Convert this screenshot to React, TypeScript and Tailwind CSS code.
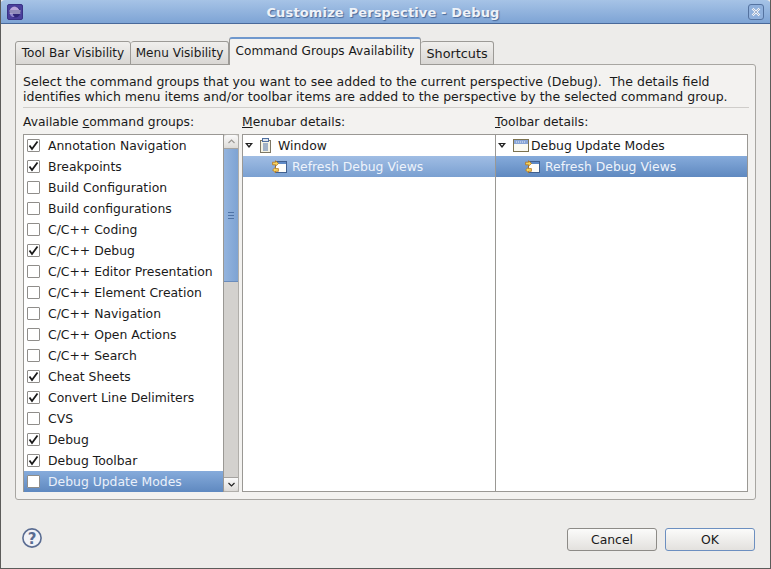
const groups: [string, boolean][] = [
  ["Annotation Navigation", true],
  ["Breakpoints", true],
  ["Build Configuration", false],
  ["Build configurations", false],
  ["C/C++ Coding", false],
  ["C/C++ Debug", true],
  ["C/C++ Editor Presentation", false],
  ["C/C++ Element Creation", false],
  ["C/C++ Navigation", false],
  ["C/C++ Open Actions", false],
  ["C/C++ Search", false],
  ["Cheat Sheets", true],
  ["Convert Line Delimiters", true],
  ["CVS", false],
  ["Debug", true],
  ["Debug Toolbar", true],
];

const selectedDark = "bg-gradient-to-b from-[#86abdb] to-[#5f89c0]";
const selectedLight = "bg-gradient-to-b from-[#a0bde4] to-[#7aa0d1]";

function Check({ on }: { on: boolean }) {
  return (
    <span className="w-[13px] h-[13px] shrink-0 bg-white border border-[#8f8d8a] rounded-[1px] flex items-center justify-center">
      {on && (
        <svg width="11" height="11" viewBox="0 0 11 11">
          <path d="M1.5 5.5 L4 9 L9.5 1.5" fill="none" stroke="#1a1a1a" strokeWidth="1.8" />
        </svg>
      )}
    </span>
  );
}

function Logo() {
  return (
    <svg width="16" height="16" viewBox="0 0 16 16" className="mt-px">
      <rect x="0.5" y="0.5" width="15" height="15" rx="1.5" fill="#4a3f9c" stroke="#3a3285" />
      <circle cx="8" cy="8" r="5.6" fill="#2f2678" />
      <path d="M8 2.4a5.6 5.6 0 0 0-5.2 3.6h9.6a5.6 5.6 0 0 0-4.4-3.6z" fill="#b9a6dc" />
      <path d="M2.6 9.5a5.6 5.6 0 0 0 3 3.6h2a9 9 0 0 1-2-3.6z" fill="#8f86cc" />
      <path d="M2.4 7h11.2M2.6 9h10.8" stroke="#f4f2fb" strokeWidth="1" />
    </svg>
  );
}

function Arrow() {
  return (
    <svg width="8" height="5" viewBox="0 0 8 5" className="shrink-0">
      <path d="M0 0H8L4 5z" fill="#222" />
      <path d="M2.6 1H5.4L4 2.8z" fill="#fff" />
    </svg>
  );
}

function DocIcon() {
  return (
    <svg width="11" height="15" viewBox="0 0 11 15" className="shrink-0">
      <rect x="0.5" y="2.5" width="10" height="12" fill="#f5f3e4" stroke="#7d7866" />
      <rect x="2.5" y="0.5" width="6" height="3" fill="#dfe6f0" stroke="#4f6f9f" />
      <path d="M3 6h5M3 8h5M3 10h5M3 12h5" stroke="#4f73ab" strokeWidth="1" />
    </svg>
  );
}

function WinIcon() {
  return (
    <svg width="16" height="13" viewBox="0 0 16 13" className="shrink-0">
      <rect x="0.5" y="0.5" width="15" height="12" fill="#fbfaf2" stroke="#7d7350" />
      <rect x="1" y="1" width="14" height="4" fill="#8aa6d6" />
      <path d="M3 3h1M5 3h1M7 3h1M9 3h1M11 3h1" stroke="#e8eef8" strokeWidth="1" />
    </svg>
  );
}

function RefreshIcon() {
  return (
    <svg width="15" height="14" viewBox="0 0 15 14" className="shrink-0">
      <rect x="3.5" y="1.5" width="11" height="11" fill="#fdfdfa" stroke="#40608f" />
      <rect x="4" y="2" width="10" height="2" fill="#5f8ac6" />
      <path d="M3.5 0.8 L6.5 3.5 L3.5 6.2 L3.5 4.8 L0.6 4.8 L0.6 2.2 L3.5 2.2z" fill="#f6d65f" stroke="#b8741a" strokeWidth="0.8" />
      <path d="M3.5 7.2 L0.6 9.9 L3.5 12.8 L3.5 11.3 L6.4 11.3 L6.4 8.6 L3.5 8.6z" fill="#f6d65f" stroke="#b8741a" strokeWidth="0.8" />
    </svg>
  );
}

function Detail({ icon, label, width, gap, selection }: { icon: React.ReactNode; label: string; width: string; gap: string; selection: string }) {
  return (
    <div className={`${width} h-[358px] bg-white border border-[#9a9894] shrink-0`}>
      <div className="h-[21px] flex items-center">
        <span className="ml-[2px] mr-[7px] flex items-center"><Arrow /></span>
        {icon}
        <span className={`${gap} text-[#1a1a1a]`}>{label}</span>
      </div>
      <div className={`h-[21px] flex items-center pl-[29px] text-[#eef3fb] ${selection}`}>
        <RefreshIcon />
        <span className="ml-[5px]">Refresh Debug Views</span>
      </div>
    </div>
  );
}

export default function App() {
  return (
    <div
      className="w-[771px] h-[569px] overflow-hidden bg-[#edecea] flex flex-col border-l border-r border-b border-[#5c5c5a] text-[12.4px] leading-[15px] text-[#1a1a1a]"
      style={{ fontFamily: '"DejaVu Sans", sans-serif' }}
    >
      <div className="h-[24px] -mx-px shrink-0 flex items-center bg-gradient-to-b from-[#a6c3e6] to-[#7ea4d5] border-b border-[#49699a] rounded-t-[5px] pl-[7px] pr-[7px]">
        <Logo />
        <div className="flex-1 pt-[2px] pr-[5px] text-center text-[13px] font-bold text-[#eef2f8] tracking-[0.15px] [text-shadow:1px_1px_1px_#4a6a9a]">
          Customize Perspective - Debug
        </div>
        <div className="w-[16px] h-[16px] border border-[#54729f] rounded-[3px] flex items-center justify-center bg-[#8fb0dc]">
          <svg width="10" height="10" viewBox="0 0 10 10">
            <path d="M1.5 1.5L8.5 8.5M8.5 1.5L1.5 8.5" stroke="#f4f6fa" strokeWidth="2.4" />
            <path d="M1.5 1.5L8.5 8.5M8.5 1.5L1.5 8.5" stroke="#54729f" strokeWidth="0.5" />
          </svg>
        </div>
      </div>

      <div className="flex items-end h-[40px] pl-[14px] shrink-0 relative z-10 text-[12.1px] whitespace-nowrap">
        <div className="h-[24px] w-[116px] -mb-px flex items-center justify-center bg-gradient-to-b from-[#f0efed] to-[#d9d7d4] border border-[#9c9a96] rounded-t-[3px]">Tool Bar Visibility</div>
        <div className="h-[24px] w-[98px] -mb-px flex items-center justify-center bg-gradient-to-b from-[#f0efed] to-[#d9d7d4] border border-l-0 border-[#9c9a96] rounded-t-[3px]">Menu Visibility</div>
        <div className="h-[28px] w-[192px] -mb-px pb-px flex items-center justify-center bg-[#f3f2f0] border-x border-[#9c9a96] border-t-2 border-t-[#6f98cd] rounded-t-[3px]">Command Groups Availability</div>
        <div className="h-[24px] w-[73px] -mb-px flex items-center justify-center text-[12.8px] bg-gradient-to-b from-[#f0efed] to-[#d9d7d4] border border-l-0 border-[#9c9a96] rounded-t-[3px]">Shortcuts</div>
      </div>

      <div className="ml-[14px] w-[741px] h-[436px] shrink-0 bg-[#f3f2f0] border border-[#a8a6a2] rounded-b-[3px] rounded-tr-[3px] px-[7px] pt-[9px]">
        <p className="h-[30px] whitespace-nowrap text-[12.5px]">
          Select the command groups that you want to see added to the current perspective (Debug).&nbsp; The details field
          <br />
          identifies which menu items and/or toolbar items are added to the perspective by the selected command group.
        </p>
        <div className="mt-[3px] h-px bg-[#cfcdca] mr-[-1px]" />
        <div className="flex mt-[7px] h-[15px] text-[12.3px]">
          <div className="w-[219px]">Available <u>c</u>ommand groups:</div>
          <div className="w-[253px]"><u>M</u>enubar details:</div>
          <div><u>T</u>oolbar details:</div>
        </div>
        <div className="flex mt-[4px]">
          <div className="w-[201px] h-[358px] bg-white border border-[#9a9894] shrink-0">
            {groups.map(([name, on]) => (
              <div key={name} className="h-[21px] flex items-center pl-[3px]">
                <Check on={on} />
                <span className="ml-[8px]">{name}</span>
              </div>
            ))}
            <div className={`h-[21px] flex items-center pl-[3px] text-[#eaf0fa] ${selectedDark}`}>
              <Check on={false} />
              <span className="ml-[8px]">Debug Update Modes</span>
            </div>
          </div>
          <div className="w-[15px] h-[358px] shrink-0 bg-[#d3d1ce] border border-[#b0aeaa] border-l-0 flex flex-col mr-[3px]">
            <div className="h-[14px] shrink-0 bg-gradient-to-b from-[#fafafa] to-[#dddbd8] border-b border-[#a5a3a0] rounded-t-[3px] flex items-center justify-center">
              <svg width="7" height="5" viewBox="0 0 7 5"><path d="M0.5 4L3.5 1L6.5 4" fill="none" stroke="#9a9894" strokeWidth="1.2" /></svg>
            </div>
            <div className="h-[133px] shrink-0 bg-gradient-to-r from-[#94b4de] to-[#7ea3d3] border-b border-[#6a8cbc] flex items-center justify-center">
              <div className="w-[6px] h-[7px] border-y border-[#4f73a6] relative flex items-center">
                <div className="w-full h-px bg-[#4f73a6]" />
              </div>
            </div>
            <div className="flex-1" />
            <div className="h-[14px] shrink-0 bg-gradient-to-b from-[#fafafa] to-[#dddbd8] border-t border-[#a5a3a0] rounded-b-[3px] flex items-center justify-center">
              <svg width="7" height="5" viewBox="0 0 7 5"><path d="M0.5 1L3.5 4L6.5 1" fill="none" stroke="#222" strokeWidth="1.2" /></svg>
            </div>
          </div>
          <Detail icon={<DocIcon />} label="Window" width="w-[254px]" gap="ml-[7px]" selection={selectedLight} />
          <div className="-ml-px">
            <Detail icon={<WinIcon />} label="Debug Update Modes" width="w-[253px]" gap="ml-[2px]" selection={selectedDark} />
          </div>
        </div>
      </div>

      <div className="flex items-start justify-between pl-[21px] pr-[15px] mt-[28px]">
        <svg width="20" height="20" viewBox="0 0 20 20">
          <circle cx="10" cy="10" r="9.1" fill="#f1f2f6" stroke="#5a6c92" strokeWidth="1.6" />
          <text x="10" y="15.5" textAnchor="middle" fontSize="15" fontWeight="bold" fill="#5a6c92" fontFamily="DejaVu Sans">?</text>
        </svg>
        <div className="flex gap-[8px]">
          <button className="w-[90px] h-[23px] rounded-[3px] border border-[#8d8b87] bg-gradient-to-b from-[#fbfbfa] to-[#e3e1de]">Cancel</button>
          <button className="w-[90px] h-[23px] rounded-[3px] border border-[#6c8fc0] bg-gradient-to-b from-[#fbfbfa] to-[#e3e1de]">OK</button>
        </div>
      </div>
    </div>
  );
}
